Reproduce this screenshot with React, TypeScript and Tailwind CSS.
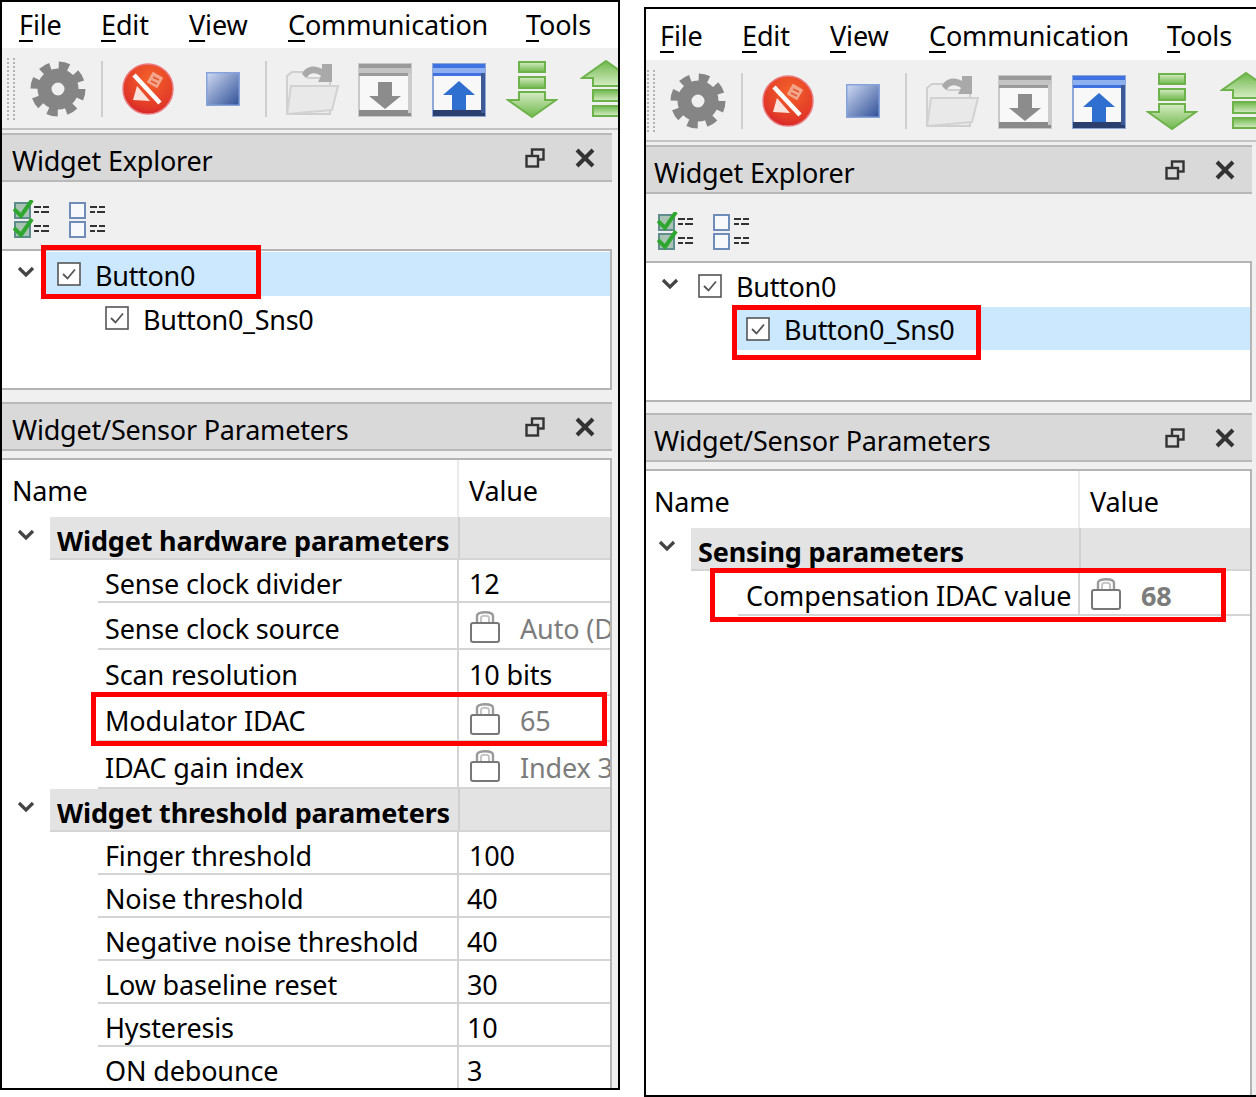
const menus = [
  { key: "F", rest: "ile", w: "w-[82px]" },
  { key: "E", rest: "dit", w: "w-[88px]" },
  { key: "V", rest: "iew", w: "w-[99px]" },
  { key: "C", rest: "ommunication", w: "w-[238px]" },
  { key: "T", rest: "ools", w: "w-[72px]" },
];

const GearIcon = () => (
  <svg width="56" height="56" viewBox="0 0 56 56">
    <circle cx="28" cy="28" r="23" fill="none" stroke="#858585" strokeWidth="9" strokeDasharray="9.8 8.27" />
    <circle cx="28" cy="28" r="13.5" fill="none" stroke="#858585" strokeWidth="14" />
  </svg>
);

const StopIcon = () => (
  <svg width="54" height="54" viewBox="0 0 54 54">
    <defs>
      <radialGradient id="stopRed" cx="0.55" cy="0.3" r="0.75">
        <stop offset="0" stopColor="#f4622a" />
        <stop offset="0.75" stopColor="#e23a28" />
        <stop offset="1" stopColor="#d3202a" />
      </radialGradient>
    </defs>
    <circle cx="27" cy="27" r="25" fill="url(#stopRed)" stroke="#ea7a7e" strokeWidth="1.5" />
    <rect x="28" y="12" width="12" height="12" fill="#f3a58c" transform="rotate(30 34 18)" />
    <path d="M32 15 L38 18 M30 19 L36 22" stroke="#e2552f" strokeWidth="1.5" />
    <path d="M12 38 L16 24 L29 39 Z" fill="#fbe3dc" />
    <path d="M13 13 L39 41" stroke="#fff" strokeWidth="4.5" />
  </svg>
);

const SquareIcon = () => (
  <svg width="34" height="34" viewBox="0 0 34 34">
    <defs>
      <linearGradient id="squareBlue" x1="0" y1="0" x2="1" y2="1">
        <stop offset="0" stopColor="#cfdaf3" />
        <stop offset="1" stopColor="#2f4f96" />
      </linearGradient>
    </defs>
    <rect x="0.75" y="0.75" width="32.5" height="32.5" fill="url(#squareBlue)" stroke="#86a3dc" strokeWidth="1.5" />
  </svg>
);

const FolderIcon = () => (
  <svg width="56" height="54" viewBox="0 0 56 54">
    <path d="M3 52 L3 14 L8 10 L20 10 L24 16 L46 16 L46 52 Z" fill="#ededed" stroke="#cfcfcf" strokeWidth="2" />
    <path d="M18 12 C22 3 32 3 38 7 L38 2 L48 2 L48 20 L34 20 L37 14 C32 10 26 10 22 16 Z" fill="#a9a9a9" />
    <path d="M7 24 L54 24 L48 48 L3 52 Z" fill="#e9e9e9" stroke="#d2d2d2" strokeWidth="2" />
  </svg>
);

const BoxArrowIcon = ({ dir, blue }: { dir: "up" | "down"; blue?: boolean }) => {
  const frame = blue ? "#8fa8d8" : "#c9c9c9";
  const bar = blue ? "#3f72e0" : "#9a9a9a";
  const base = blue ? "#2a3f6e" : "#8a8a8a";
  const arrow = blue ? "#2f6fd0" : "#8c8c8c";
  return (
    <svg width="54" height="54" viewBox="0 0 54 54">
      <rect x="1" y="1" width="52" height="52" fill="#f8f8f8" stroke={frame} strokeWidth="2" />
      <rect x="1" y="1" width="52" height="4" fill={bar} />
      <rect x="1" y="5" width="52" height="5" fill={blue ? "#8fb0ee" : "#c4c4c4"} />
      <rect x="1" y="10" width="52" height="3" fill={bar} />
      <rect x="1" y="47" width="52" height="6" fill={base} />
      <rect x={blue ? 49 : 50} y="10" width="4" height="40" fill={blue ? "#3d5a96" : "#cccccc"} />
      {dir === "down" ? (
        <path d="M20 19 H34 V33 H43 L27 46 L11 33 H20 Z" fill={arrow} />
      ) : (
        <path d="M27 18 L43 32 H34 V47 H20 V32 H11 Z" fill={arrow} />
      )}
    </svg>
  );
};

const GreenArrow = ({ up }: { up?: boolean }) => (
  <svg width="52" height="58" viewBox="0 0 52 58">
    <defs>
      <linearGradient id="greenFill" x1="0" y1="0" x2="0" y2="1">
        <stop offset="0" stopColor="#d6ecc4" />
        <stop offset="1" stopColor="#6fb84c" />
      </linearGradient>
    </defs>
    <g transform={up ? "rotate(180 26 29)" : undefined} fill="url(#greenFill)" stroke="#6db24a" strokeWidth="2">
      <rect x="13" y="2" width="26" height="10" />
      <rect x="13" y="17" width="26" height="11" />
      <path d="M13 32 H39 V40 H50 L26 57 L2 40 H13 Z" />
    </g>
  </svg>
);

const DockIcon = () => (
  <svg width="20" height="20" viewBox="0 0 20 20" fill="none" stroke="#333" strokeWidth="2.4">
    <rect x="7" y="1.5" width="11.5" height="10" />
    <rect x="1.5" y="8" width="11.5" height="10.5" fill="#d9d9d9" />
  </svg>
);

const CloseIcon = () => (
  <svg width="20" height="20" viewBox="0 0 20 20" stroke="#333" strokeWidth="4">
    <path d="M2 2 L18 18 M18 2 L2 18" />
  </svg>
);

const ListCheckIcon = ({ checked }: { checked?: boolean }) => (
  <svg width="38" height="38" viewBox="0 0 38 38">
    {[3, 22].map((y) => (
      <g key={y}>
        <rect x={checked ? 2 : 1} y={y} width="15" height="15" fill={checked ? "#a9c3b4" : "#f6f8fc"} stroke={checked ? "#5f8c8c" : "#6f8cb8"} strokeWidth="2" />
        <path d={`M21 ${y + 4} H28 M30 ${y + 4} H36 M21 ${y + 9} H26 M28 ${y + 9} H36`} stroke="#333" strokeWidth="2" />
        {checked && <path d={`M1 ${y + 6} L8 ${y + 13} L19 ${y - 3}`} fill="none" stroke="#2fa62f" strokeWidth="4" />}
      </g>
    ))}
  </svg>
);

const Chevron = () => (
  <svg width="18" height="12" viewBox="0 0 18 12" fill="none" stroke="#444" strokeWidth="3.2">
    <path d="M2 2 L9 9 L16 2" />
  </svg>
);

const TreeCheck = () => (
  <svg width="24" height="24" viewBox="0 0 24 24" className="shrink-0">
    <rect x="1" y="1" width="22" height="22" fill="#fff" stroke="#555" strokeWidth="1.6" />
    <path d="M6 12 L10.5 16.5 L18 7.5" fill="none" stroke="#555" strokeWidth="1.8" />
  </svg>
);

const LockIcon = () => (
  <svg width="32" height="34" viewBox="0 0 32 34" className="shrink-0">
    <path d="M8 14 V7 C8 2 24 2 24 7 V14" fill="none" stroke="#9a9a9a" strokeWidth="2.4" />
    <path d="M12 14 V9 C12 6 20 6 20 9 V14" fill="none" stroke="#c4c4c4" strokeWidth="2" />
    <rect x="2" y="14" width="28" height="19" rx="2" fill="#fff" stroke="#777" strokeWidth="2" />
  </svg>
);

type Row = { name: string; value: string; locked?: boolean; bold?: boolean; h: string; dx?: string };
type Section = { title: string; h: string; rows: Row[] };

const TitleBar = ({ title, pl }: { title: string; pl: string }) => (
  <div className={"h-[49px] shrink-0 flex items-center bg-[#d9d9d9] border-y-2 border-[#b9b9b9] " + pl}>
    <span className="flex-1 text-[27px] tracking-[-0.2px] whitespace-nowrap pt-[8px]">{title}</span>
    <span className="w-[50px] flex justify-center"><DockIcon /></span>
    <span className="w-[50px] flex justify-center mr-[2px]"><CloseIcon /></span>
  </div>
);

const Panel = ({
  className,
  selected,
  sections,
  nameW,
  valueW,
  treeBox,
  tableW,
  chevClass,
  rowIndent,
  textIndent,
  treeX,
  childX,
  menuClass,
  toolbarPl,
  titlePl,
  namePl,
  gapH,
  treeRowH,
}: {
  className: string;
  selected: number;
  sections: Section[];
  nameW: string;
  valueW: string;
  treeBox: string;
  tableW: string;
  chevClass: string;
  rowIndent: string;
  textIndent: string;
  treeX: string;
  childX: string;
  menuClass: string;
  toolbarPl: string;
  titlePl: string;
  namePl: string;
  gapH: string;
  treeRowH: string;
}) => (
  <div className={"relative w-[620px] h-[1090px] shrink-0 border-2 border-black flex flex-col overflow-hidden bg-[#f0f0f0] text-black " + className}>
    <div className={"shrink-0 bg-white flex items-center text-[27px] tracking-[-0.15px] " + menuClass}>
      {menus.map((m) => (
        <span key={m.key} className={m.w + " shrink-0"}>
          <span className="underline decoration-2 underline-offset-[5px]">{m.key}</span>
          {m.rest}
        </span>
      ))}
    </div>
    <div className={"h-[80px] shrink-0 mt-[2px] flex items-center border-b-2 border-[#c4c4c4] overflow-hidden " + toolbarPl}>
      <div className="w-[8px] h-[62px] shrink-0 border-x-2 border-dotted border-[#b5b5b5]" />
      <div className="ml-[15px] shrink-0"><GearIcon /></div>
      <div className="ml-[15px] w-[2px] h-[56px] shrink-0 bg-[#cfcfcf]" />
      <div className="ml-[18px] shrink-0"><StopIcon /></div>
      <div className="ml-[31px] shrink-0"><SquareIcon /></div>
      <div className="ml-[25px] w-[2px] h-[56px] shrink-0 bg-[#cfcfcf]" />
      <div className="ml-[17px] shrink-0"><FolderIcon /></div>
      <div className="ml-[18px] shrink-0 pt-[2px]"><BoxArrowIcon dir="down" /></div>
      <div className="ml-[20px] shrink-0 pt-[2px]"><BoxArrowIcon dir="up" blue /></div>
      <div className="ml-[20px] shrink-0"><GreenArrow /></div>
      <div className="ml-[22px] shrink-0"><GreenArrow up /></div>
    </div>
    <div className={"mt-[3px] " + tableW}>
      <TitleBar title="Widget Explorer" pl={titlePl} />
    </div>
    <div className="h-[67px] shrink-0 flex items-center pl-[11px] gap-[18px] pt-[6px]">
      <ListCheckIcon checked />
      <ListCheckIcon />
    </div>
    <div className={"h-[141px] shrink-0 bg-white border-y-2 border-[#b4b4b4] border-r-2 pt-px " + tableW}>
      {["Button0", "Button0_Sns0"].map((label, i) => (
        <div key={label} className={"relative flex items-center text-[27px] tracking-[-0.3px] " + treeRowH}>
          {i === 0 && <span className="absolute left-[15px] top-[14px]"><Chevron /></span>}
          {i === selected && <div className={"absolute inset-y-0 right-0 bg-[#cce8ff] " + (i === 0 ? "left-[42px]" : "left-[88px]")} />}
          <span className={"relative flex items-center gap-[14px] " + (i === 0 ? treeX : childX)}>
            <TreeCheck />
            <span className="pt-[4px]">{label}</span>
          </span>
        </div>
      ))}
    </div>
    <div className={"shrink-0 " + gapH} />
    <div className={tableW}>
      <TitleBar title="Widget/Sensor Parameters" pl={titlePl} />
    </div>
    <div className={"mt-[7px] flex-1 bg-white border-t-2 border-r-2 border-[#b4b4b4] text-[27px] tracking-[-0.15px] overflow-hidden whitespace-nowrap " + tableW}>
      <div className="h-[57px] flex items-center">
        <span className={"pt-[6px] h-full flex items-center border-r-2 border-[#ececec] " + namePl + " " + nameW}>Name</span>
        <span className="pl-[10px] pt-[6px]">Value</span>
      </div>
      {sections.map((s) => (
        <div key={s.title}>
          <div className={"flex " + s.h}>
            <span className={"shrink-0 flex items-center justify-center pb-[8px] " + chevClass}><Chevron /></span>
            <div className="flex-1 flex bg-[#e3e3e3] border-b-2 border-[#d4d4d4]">
              <span className="flex-1 flex items-center pl-[7px] pt-[7px] font-bold tracking-[-0.15px]">{s.title}</span>
              <span className={"border-l-2 border-[#d0d0d0] " + valueW} />
            </div>
          </div>
          {s.rows.map((r) => (
            <div key={r.name} className={"flex " + r.h + " " + rowIndent}>
              <div className="flex-1 flex border-b-2 border-[#d4d4d4] min-w-0">
                <span className={"shrink-0 flex items-center pt-[7px] border-r-2 border-[#d4d4d4] " + textIndent}>{r.name}</span>
                {r.locked ? (
                  <span className={"flex items-center gap-[19px] pl-[10px] text-[#7c7c7c] " + (r.bold ? "font-bold" : "")}>
                    <LockIcon />
                    <span className="pt-[7px]">{r.value}</span>
                  </span>
                ) : (
                  <span className={"flex items-center pt-[7px] " + (r.dx ?? "pl-[10px]")}>{r.value}</span>
                )}
              </div>
            </div>
          ))}
        </div>
      ))}
    </div>
    <div className={"absolute border-[5px] border-[#ff0000] pointer-events-none " + treeBox} />
  </div>
);

const leftSections: Section[] = [
  {
    title: "Widget hardware parameters",
    h: "h-[43px]",
    rows: [
      { name: "Sense clock divider", value: "12", h: "h-[43px]" },
      { name: "Sense clock source", value: "Auto (DIV)", locked: true, h: "h-[47px]" },
      { name: "Scan resolution", value: "10 bits", h: "h-[46px]" },
      { name: "Modulator IDAC", value: "65", locked: true, h: "h-[46px]" },
      { name: "IDAC gain index", value: "Index 3", locked: true, h: "h-[47px]" },
    ],
  },
  {
    title: "Widget threshold parameters",
    h: "h-[43px]",
    rows: [
      { name: "Finger threshold", value: "100", h: "h-[43px]" },
      { name: "Noise threshold", value: "40", dx: "pl-[8px]", h: "h-[43px]" },
      { name: "Negative noise threshold", value: "40", dx: "pl-[8px]", h: "h-[43px]" },
      { name: "Low baseline reset", value: "30", dx: "pl-[8px]", h: "h-[43px]" },
      { name: "Hysteresis", value: "10", dx: "pl-[8px]", h: "h-[43px]" },
      { name: "ON debounce", value: "3", dx: "pl-[8px]", h: "h-[43px]" },
    ],
  },
];

const rightSections: Section[] = [
  {
    title: "Sensing parameters",
    h: "h-[43px]",
    rows: [{ name: "Compensation IDAC value", value: "68", locked: true, bold: true, h: "h-[45px]" }],
  },
];

export default function App() {
  return (
    <div className="relative w-[1256px] h-[1097px] bg-white font-['Noto_Sans',sans-serif] flex items-start overflow-hidden">
      <Panel
        className=""
        selected={0}
        sections={leftSections}
        nameW="w-[457px]"
        valueW="w-[152px]"
        tableW="w-[610px]"
        chevClass="w-[48px]"
        rowIndent="pl-[96px]"
        textIndent="w-[361px] pl-[7px]"
        treeX="pl-[55px]"
        childX="pl-[103px]"
        treeBox="left-[39px] top-[243px] w-[220px] h-[54px]"
        menuClass="h-[46px] pl-[17px]"
        toolbarPl="pl-[5px]"
        titlePl="pl-[10px]"
        namePl="pl-[10px]"
        gapH="h-[12px]"
        treeRowH="h-[44px]"
      />
      <Panel
        className="ml-[24px] mt-[7px]"
        selected={1}
        sections={rightSections}
        nameW="w-[434px]"
        valueW="w-[171px]"
        tableW="w-[606px]"
        chevClass="w-[45px] pr-[3px]"
        rowIndent="pl-[92px]"
        textIndent="w-[342px] pl-[8px]"
        treeX="pl-[52px]"
        childX="pl-[100px]"
        treeBox="left-[86px] top-[296px] w-[249px] h-[55px]"
        menuClass="h-[51px] pl-[14px] pt-[4px]"
        toolbarPl="pl-[1px]"
        titlePl="pl-[8px]"
        namePl="pl-[8px]"
        gapH="h-[11px]"
        treeRowH="h-[43px]"
      />
      <div className="absolute left-[91px] top-[692px] w-[516px] h-[54px] border-[5px] border-[#ff0000]" />
      <div className="absolute left-[710px] top-[568px] w-[516px] h-[54px] border-[5px] border-[#ff0000]" />
    </div>
  );
}
